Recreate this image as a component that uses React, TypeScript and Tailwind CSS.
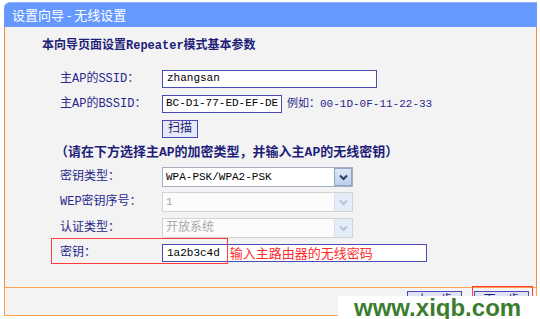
import React from 'react';

const mono = "font-['Liberation_Mono','Noto_Sans_CJK_SC',monospace]";

const Chevron = ({ disabled }: { disabled?: boolean }) => (
  <div
    className={
      disabled
        ? 'w-[18px] h-full flex items-center justify-center bg-[#e4edfa] border-l border-[#d6e0ee]'
        : 'w-[18px] h-full flex items-center justify-center bg-gradient-to-b from-[#dde8f8] to-[#bccfec] border border-[#8ea4c8]'
    }
  >
    <svg width="9" height="7" viewBox="0 0 9 7">
      <path d="M1 1.5 L4.5 5 L8 1.5" fill="none" stroke={disabled ? '#b4c4da' : '#2c3a58'} strokeWidth="2" />
    </svg>
  </div>
);

const Label = ({ children }: { children: React.ReactNode }) => (
  <div className={`w-[102px] pl-[55px] box-content text-[12px] text-[#28288a] ${mono}`}>{children}</div>
);

export default function App() {
  return (
    <div className="w-[540px] h-[319px] bg-white relative overflow-hidden pt-[2px] pl-[4px] pr-[3px]">
      {/* title bar */}
      <div className="h-[25px] rounded-tl-[6px] bg-[#6699ff] border-t border-[#8fb2ff] text-white text-[13px] leading-[23px] pl-[8px] font-['Noto_Sans_CJK_SC',sans-serif]">
        设置向导 - 无线设置
      </div>

      {/* content */}
      <div className="h-[260px] bg-[#f3f3f3] border-x border-[#f7893e] flex flex-col">
        <div className={`mt-[11px] ml-[37px] h-[16px] leading-[16px] text-[12px] font-bold text-[#1e1e78] ${mono}`}>
          本向导页面设置Repeater模式基本参数
        </div>

        <div className="mt-[16px] h-[18px] flex items-center">
          <Label>主AP的SSID：</Label>
          <div className={`w-[215px] h-[18px] bg-white border-[1.5px] border-[#4b4bb5] px-[4px] text-[11px] leading-[15px] text-black ${mono}`}>
            zhangsan
          </div>
        </div>

        <div className="mt-[7px] h-[18px] flex items-center">
          <Label>主AP的BSSID：</Label>
          <div className={`w-[120px] h-[18px] bg-white border-[1.5px] border-[#4b4bb5] px-[3px] text-[11px] leading-[15px] text-black whitespace-nowrap overflow-hidden ${mono}`}>
            BC-D1-77-ED-EF-DE
          </div>
          <div className={`ml-[5px] text-[11px] text-[#28288a] ${mono}`}>例如：00-1D-0F-11-22-33</div>
        </div>

        <div className="mt-[7px] h-[18px] flex items-center">
          <Label>{''}</Label>
          <div className={`w-[36px] h-[18px] bg-[#e6e8f5] border-[1.5px] border-[#4b4bb5] flex items-center justify-center text-[12px] text-[#1e1e6e] ${mono}`}>
            扫描
          </div>
        </div>

        <div className={`mt-[7px] ml-[50px] h-[16px] leading-[16px] text-[13px] font-bold text-[#1e1e78] whitespace-nowrap ${mono}`}>
          （请在下方选择主AP的加密类型，并输入主AP的无线密钥）
        </div>

        <div className="mt-[6px] h-[20px] flex items-center">
          <Label>密钥类型：</Label>
          <div className="w-[191px] h-[20px] bg-white border border-[#a6afbd] flex">
            <div className={`flex-1 px-[3px] text-[11px] leading-[18px] text-black ${mono}`}>WPA-PSK/WPA2-PSK</div>
            <Chevron />
          </div>
        </div>

        <div className="mt-[5px] h-[20px] flex items-center">
          <Label>WEP密钥序号：</Label>
          <div className="w-[191px] h-[20px] bg-[#fcfcfc] border border-[#d2d2d2] flex">
            <div className={`flex-1 px-[3px] text-[11px] leading-[18px] text-[#a8a8a8] ${mono}`}>1</div>
            <Chevron disabled />
          </div>
        </div>

        <div className="mt-[6px] h-[20px] flex items-center">
          <Label>认证类型：</Label>
          <div className="w-[191px] h-[20px] bg-[#fcfcfc] border border-[#d2d2d2] flex">
            <div className={`flex-1 px-[3px] text-[12px] leading-[18px] text-[#a8a8a8] ${mono}`}>开放系统</div>
            <Chevron disabled />
          </div>
        </div>

        <div className="mt-[6px] h-[18px] flex items-center">
          <Label>密钥：</Label>
          <div className="w-[265px] h-[18px] bg-white border-[1.5px] border-[#4b4bb5] flex items-center px-[4px]">
            <span className={`text-[11px] text-black ${mono}`}>1a2b3c4d</span>
            <span className="ml-[10px] text-[13px] text-[#ff2a2a] font-['Noto_Sans_CJK_SC',sans-serif]">输入主路由器的无线密码</span>
          </div>
        </div>
      </div>

      {/* button bar */}
      <div className="h-[29px] bg-[#f3f3f3] border border-[#ffa04a] flex justify-end items-start pt-[3px] pr-[7px] gap-[12px]">
        <div className={`w-[55px] h-[20px] bg-[#dfe2f6] border-[1.5px] border-[#4b4bb5] flex items-center justify-center text-[12px] text-[#1e1e6e] ${mono}`}>上一步</div>
        <div className={`w-[55px] h-[20px] bg-[#dfe2f6] border-[1.5px] border-[#4b4bb5] flex items-center justify-center text-[12px] text-[#1e1e6e] ${mono}`}>下一步</div>
      </div>

      {/* annotations */}
      <div className="absolute left-[51px] top-[238px] w-[177px] h-[26px] border-[1.5px] border-[#ff3b3b]" />
      <div className="absolute left-[472px] top-[286px] w-[61px] h-[40px] border-[1.5px] border-[#ff3b3b]" />

      {/* watermark */}
      <div className="absolute left-[338px] top-[296px] w-[202px] h-[23px] bg-white flex items-center pl-[16px]">
        <span className="text-[24px] leading-[23px] font-bold text-[#3b7d2e] font-['Liberation_Sans',sans-serif]">www.xiqb.com</span>
      </div>
    </div>
  );
}
